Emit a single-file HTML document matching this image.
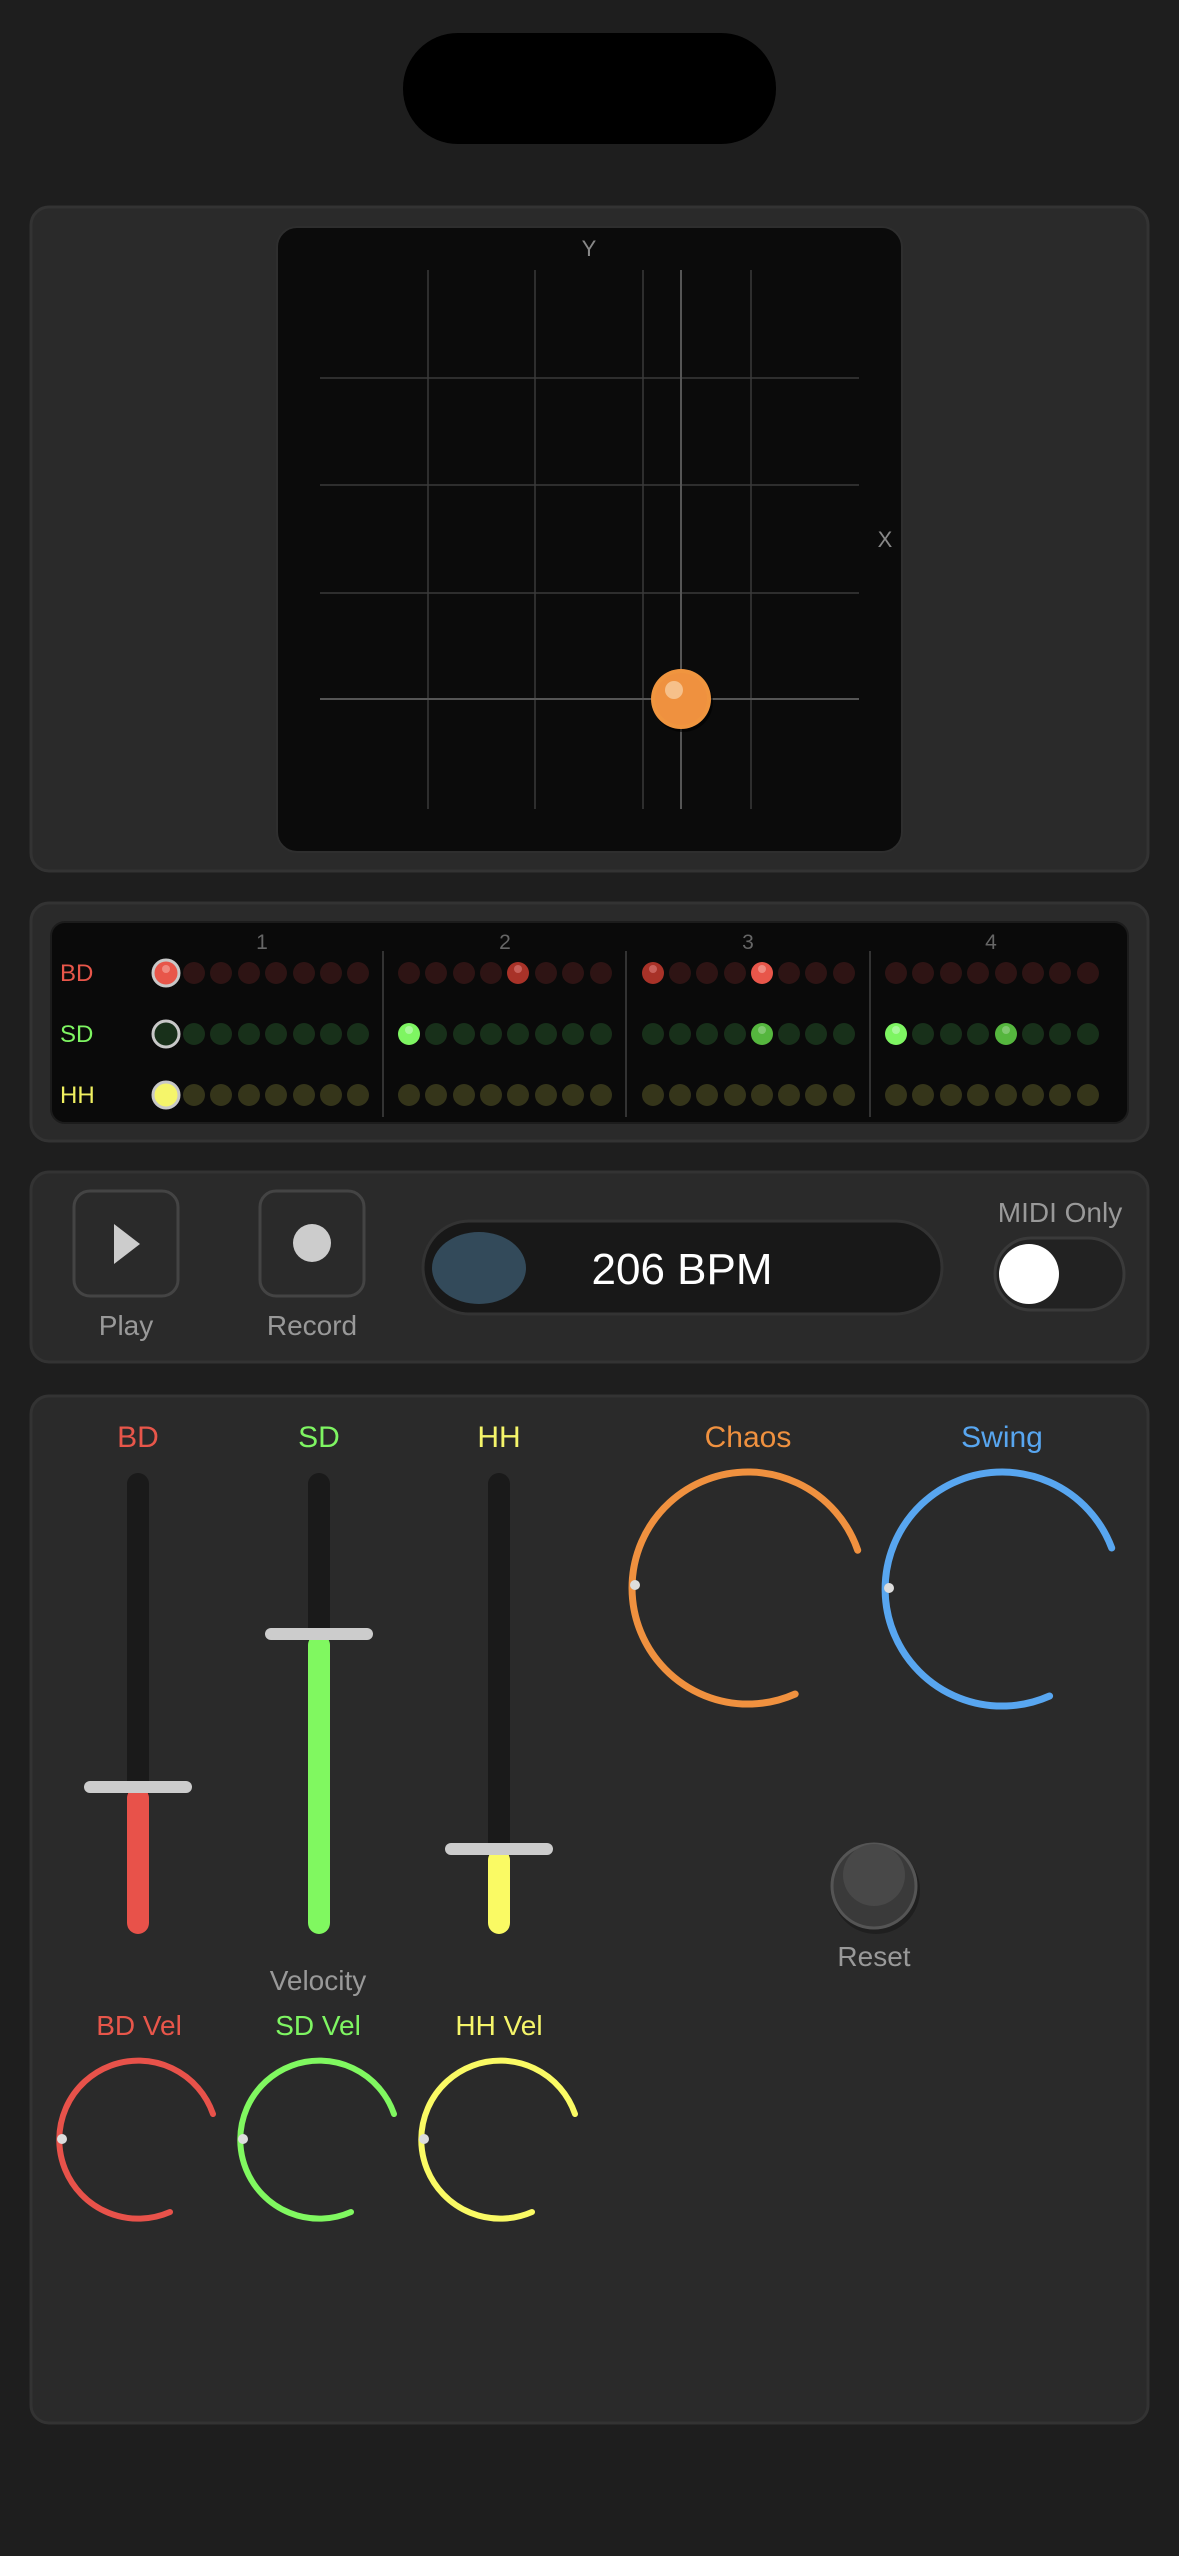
<!DOCTYPE html>
<html><head><meta charset="utf-8"><style>
html,body{margin:0;padding:0;background:#1e1e1e;}
svg{display:block;font-family:"Liberation Sans",sans-serif;}
</style></head><body>
<svg width="1179" height="2556" viewBox="0 0 1179 2556" xmlns="http://www.w3.org/2000/svg">
<rect width="1179" height="2556" fill="#1e1e1e"/>
<rect x="403" y="33" width="373" height="111" rx="55" fill="#000"/>

<!-- Panel 1 XY -->
<rect x="31" y="207" width="1117" height="664" rx="18" fill="#2a2a2a" stroke="#333" stroke-width="3"/>
<rect x="277" y="227" width="625" height="625" rx="20" fill="#0b0b0b" stroke="#2e2e2e" stroke-width="2"/>
<g stroke="#3a3a3a" stroke-width="1.5">
<line x1="428" y1="270" x2="428" y2="809"/><line x1="535" y1="270" x2="535" y2="809"/>
<line x1="643" y1="270" x2="643" y2="809"/><line x1="751" y1="270" x2="751" y2="809"/>
<line x1="320" y1="378" x2="859" y2="378"/><line x1="320" y1="485" x2="859" y2="485"/>
<line x1="320" y1="593" x2="859" y2="593"/>
</g>
<g stroke="#555" stroke-width="2"><line x1="681" y1="270" x2="681" y2="809"/><line x1="320" y1="699" x2="859" y2="699"/></g>
<circle cx="683" cy="702" r="30" fill="#000" opacity="0.6"/>
<circle cx="681" cy="699" r="30" fill="#f0953f"/>
<circle cx="681" cy="699" r="26" fill="#ee9040" opacity="0.6"/>
<circle cx="674" cy="690" r="9" fill="#f6c08a"/>
<text x="589" y="256" font-size="22" fill="#888" text-anchor="middle">Y</text>
<text x="885" y="547" font-size="22" fill="#888" text-anchor="middle">X</text>

<!-- Panel 2 sequencer -->
<rect x="31" y="903" width="1117" height="238" rx="18" fill="#2a2a2a" stroke="#333" stroke-width="3"/>
<rect x="51" y="922" width="1077" height="201" rx="14" fill="#0a0a0a" stroke="#1c1c1c" stroke-width="2"/>
<g font-size="21" fill="#666" text-anchor="middle">
<text x="262" y="949">1</text><text x="505" y="949">2</text><text x="748" y="949">3</text><text x="991" y="949">4</text>
</g>
<g stroke="#333" stroke-width="2"><line x1="383" y1="951" x2="383" y2="1117"/><line x1="626" y1="951" x2="626" y2="1117"/><line x1="870" y1="951" x2="870" y2="1117"/></g>
<g font-size="24">
<text x="60" y="981" fill="#e8564a">BD</text>
<text x="60" y="1042" fill="#7ef562">SD</text>
<text x="60" y="1103" fill="#f0f060">HH</text>
</g>
<g id="dots">
<!-- BD row y=973 -->
<g fill="#2e1414">
<circle cx="194" cy="973" r="11"/><circle cx="221" cy="973" r="11"/><circle cx="249" cy="973" r="11"/><circle cx="276" cy="973" r="11"/><circle cx="304" cy="973" r="11"/><circle cx="331" cy="973" r="11"/><circle cx="358" cy="973" r="11"/>
<circle cx="409" cy="973" r="11"/><circle cx="436" cy="973" r="11"/><circle cx="464" cy="973" r="11"/><circle cx="491" cy="973" r="11"/><circle cx="546" cy="973" r="11"/><circle cx="573" cy="973" r="11"/><circle cx="601" cy="973" r="11"/>
<circle cx="680" cy="973" r="11"/><circle cx="707" cy="973" r="11"/><circle cx="735" cy="973" r="11"/><circle cx="789" cy="973" r="11"/><circle cx="816" cy="973" r="11"/><circle cx="844" cy="973" r="11"/>
<circle cx="896" cy="973" r="11"/><circle cx="923" cy="973" r="11"/><circle cx="951" cy="973" r="11"/><circle cx="978" cy="973" r="11"/><circle cx="1006" cy="973" r="11"/><circle cx="1033" cy="973" r="11"/><circle cx="1060" cy="973" r="11"/><circle cx="1088" cy="973" r="11"/>
</g>
<circle cx="166" cy="973" r="13" fill="#e8564a" stroke="#c8c8c8" stroke-width="3"/><circle cx="166" cy="969" r="4" fill="#f08a80"/>
<circle cx="518" cy="973" r="11" fill="#a83228"/><circle cx="518" cy="969" r="4" fill="#c8605a"/>
<circle cx="653" cy="973" r="11" fill="#a83228"/><circle cx="653" cy="969" r="4" fill="#c8605a"/>
<circle cx="762" cy="973" r="11" fill="#e8564a"/><circle cx="762" cy="969" r="4" fill="#f08a80"/>
<!-- SD row y=1034 -->
<g fill="#18301a">
<circle cx="194" cy="1034" r="11"/><circle cx="221" cy="1034" r="11"/><circle cx="249" cy="1034" r="11"/><circle cx="276" cy="1034" r="11"/><circle cx="304" cy="1034" r="11"/><circle cx="331" cy="1034" r="11"/><circle cx="358" cy="1034" r="11"/>
<circle cx="436" cy="1034" r="11"/><circle cx="464" cy="1034" r="11"/><circle cx="491" cy="1034" r="11"/><circle cx="518" cy="1034" r="11"/><circle cx="546" cy="1034" r="11"/><circle cx="573" cy="1034" r="11"/><circle cx="601" cy="1034" r="11"/>
<circle cx="653" cy="1034" r="11"/><circle cx="680" cy="1034" r="11"/><circle cx="707" cy="1034" r="11"/><circle cx="735" cy="1034" r="11"/><circle cx="789" cy="1034" r="11"/><circle cx="816" cy="1034" r="11"/><circle cx="844" cy="1034" r="11"/>
<circle cx="923" cy="1034" r="11"/><circle cx="951" cy="1034" r="11"/><circle cx="978" cy="1034" r="11"/><circle cx="1033" cy="1034" r="11"/><circle cx="1060" cy="1034" r="11"/><circle cx="1088" cy="1034" r="11"/>
</g>
<circle cx="166" cy="1034" r="13" fill="#18301a" stroke="#c8c8c8" stroke-width="3"/>
<circle cx="409" cy="1034" r="11" fill="#7ef562"/><circle cx="409" cy="1030" r="4" fill="#a8f89a"/>
<circle cx="762" cy="1034" r="11" fill="#55b63e"/><circle cx="762" cy="1030" r="4" fill="#80c870"/>
<circle cx="896" cy="1034" r="11" fill="#7ef562"/><circle cx="896" cy="1030" r="4" fill="#a8f89a"/>
<circle cx="1006" cy="1034" r="11" fill="#55b63e"/><circle cx="1006" cy="1030" r="4" fill="#80c870"/>
<!-- HH row y=1095 -->
<g fill="#35351a">
<circle cx="194" cy="1095" r="11"/><circle cx="221" cy="1095" r="11"/><circle cx="249" cy="1095" r="11"/><circle cx="276" cy="1095" r="11"/><circle cx="304" cy="1095" r="11"/><circle cx="331" cy="1095" r="11"/><circle cx="358" cy="1095" r="11"/>
<circle cx="409" cy="1095" r="11"/><circle cx="436" cy="1095" r="11"/><circle cx="464" cy="1095" r="11"/><circle cx="491" cy="1095" r="11"/><circle cx="518" cy="1095" r="11"/><circle cx="546" cy="1095" r="11"/><circle cx="573" cy="1095" r="11"/><circle cx="601" cy="1095" r="11"/>
<circle cx="653" cy="1095" r="11"/><circle cx="680" cy="1095" r="11"/><circle cx="707" cy="1095" r="11"/><circle cx="735" cy="1095" r="11"/><circle cx="762" cy="1095" r="11"/><circle cx="789" cy="1095" r="11"/><circle cx="816" cy="1095" r="11"/><circle cx="844" cy="1095" r="11"/>
<circle cx="896" cy="1095" r="11"/><circle cx="923" cy="1095" r="11"/><circle cx="951" cy="1095" r="11"/><circle cx="978" cy="1095" r="11"/><circle cx="1006" cy="1095" r="11"/><circle cx="1033" cy="1095" r="11"/><circle cx="1060" cy="1095" r="11"/><circle cx="1088" cy="1095" r="11"/>
</g>
<circle cx="166" cy="1095" r="13" fill="#f5f56a" stroke="#c8c8c8" stroke-width="3"/>
</g>

<!-- Panel 3 transport -->
<rect x="31" y="1172" width="1117" height="190" rx="18" fill="#2a2a2a" stroke="#333" stroke-width="3"/>
<rect x="74" y="1191" width="104" height="105" rx="16" fill="#2a2a2a" stroke="#444" stroke-width="3"/>
<path d="M114 1224 L140 1244 L114 1264 Z" fill="#ccc"/>
<rect x="260" y="1191" width="104" height="105" rx="16" fill="#2a2a2a" stroke="#444" stroke-width="3"/>
<circle cx="312" cy="1243" r="19" fill="#ccc"/>
<g font-size="28" fill="#999" text-anchor="middle">
<text x="126" y="1335">Play</text><text x="312" y="1335">Record</text>
<text x="1060" y="1222">MIDI Only</text>
</g>
<rect x="423" y="1221" width="519" height="93" rx="46.5" fill="#181818" stroke="#333" stroke-width="3"/>
<ellipse cx="479" cy="1268" rx="47" ry="36" fill="#334a5a"/>
<text x="682" y="1284" font-size="44" fill="#fff" text-anchor="middle">206 BPM</text>
<rect x="995" y="1238" width="129" height="72" rx="36" fill="#222" stroke="#3a3a3a" stroke-width="3"/>
<circle cx="1029" cy="1274" r="30" fill="#fff"/>

<!-- Panel 4 mixer -->
<rect x="31" y="1396" width="1117" height="1027" rx="18" fill="#2a2a2a" stroke="#333" stroke-width="3"/>
<g font-size="30" text-anchor="middle">
<text x="138" y="1447" fill="#e8564a">BD</text>
<text x="319" y="1447" fill="#7ef562">SD</text>
<text x="499" y="1447" fill="#f5f56a">HH</text>
<text x="748" y="1447" fill="#f0913f">Chaos</text>
<text x="1002" y="1447" fill="#58a6f0">Swing</text>
</g>
<g fill="#1a1a1a">
<rect x="127" y="1473" width="22" height="461" rx="11"/>
<rect x="308" y="1473" width="22" height="461" rx="11"/>
<rect x="488" y="1473" width="22" height="461" rx="11"/>
</g>
<rect x="127" y="1787" width="22" height="147" rx="11" fill="#e8524a"/>
<rect x="308" y="1634" width="22" height="300" rx="11" fill="#80f860"/>
<rect x="488" y="1849" width="22" height="85" rx="11" fill="#fafa64"/>
<g fill="#ccc">
<rect x="84" y="1781" width="108" height="12" rx="6"/>
<rect x="265" y="1628" width="108" height="12" rx="6"/>
<rect x="445" y="1843" width="108" height="12" rx="6"/>
</g>
<!-- big knobs -->
<path d="M795.2 1694 A116 116 0 1 1 857.7 1550.2" fill="none" stroke="#f0913f" stroke-width="7" stroke-linecap="round"/>
<circle cx="635" cy="1585" r="5" fill="#ddd"/>
<path d="M1049.6 1696 A117 117 0 1 1 1111.7 1548" fill="none" stroke="#58a6f0" stroke-width="7" stroke-linecap="round"/>
<circle cx="889" cy="1588" r="5" fill="#ddd"/>
<!-- reset -->
<circle cx="876" cy="1890" r="44" fill="#1f1f1f"/>
<circle cx="874" cy="1886" r="42" fill="#3a3a3a" stroke="#555" stroke-width="3"/>
<circle cx="874" cy="1875" r="31" fill="#484848"/>
<g font-size="28" fill="#999" text-anchor="middle">
<text x="874" y="1966">Reset</text>
<text x="318" y="1990">Velocity</text>
</g>
<g font-size="28" text-anchor="middle">
<text x="139" y="2035" fill="#e8564a">BD Vel</text>
<text x="318" y="2035" fill="#7ef562">SD Vel</text>
<text x="499" y="2035" fill="#f5f56a">HH Vel</text>
</g>
<path d="M170 2212 A79 79 0 1 1 213 2114" fill="none" stroke="#e8524a" stroke-width="6" stroke-linecap="round"/>
<circle cx="62" cy="2139" r="5" fill="#ddd"/>
<path d="M351 2212 A79 79 0 1 1 394 2114" fill="none" stroke="#80f860" stroke-width="6" stroke-linecap="round"/>
<circle cx="243" cy="2139" r="5" fill="#ddd"/>
<path d="M532 2212 A79 79 0 1 1 575 2114" fill="none" stroke="#fafa64" stroke-width="6" stroke-linecap="round"/>
<circle cx="424" cy="2139" r="5" fill="#ddd"/>
</svg>
</body></html>
